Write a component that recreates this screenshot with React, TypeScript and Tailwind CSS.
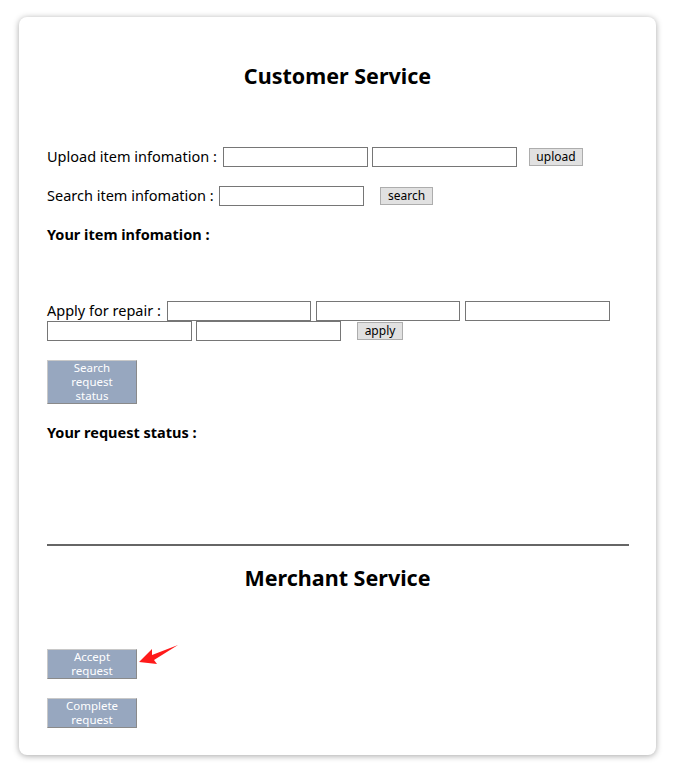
import React from "react";

const font = { fontFamily: '"Noto Sans", "Open Sans", sans-serif' };

function Input({ w = "w-[145px]" }: { w?: string }) {
  return <div className={`${w} h-[20px] border border-[#767676] bg-white shrink-0`} />;
}

function SmallBtn({ label, w }: { label: string; w: string }) {
  return (
    <div className={`${w} h-[18px] border border-[#adadad] bg-[#e1e1e1] flex items-center justify-center text-[12px] leading-none text-black shrink-0`}>
      {label}
    </div>
  );
}

function BlueBtn({ lines, h }: { lines: string[]; h: string }) {
  return (
    <div className={`w-[90px] ${h} border border-t-[#c8c8c8] border-l-[#c8c8c8] border-r-[#8a8a8a] border-b-[#8a8a8a] bg-[#97a7bf] flex flex-col items-center justify-center text-white text-[11.5px] leading-[14px]`}>
      {lines.map((l) => (
        <span key={l} className="block h-[14px] leading-[14px]">{l}</span>
      ))}
    </div>
  );
}

export default function App() {
  return (
    <div className="w-[674px] h-[772px] bg-white pt-[17px] pl-[19px]" style={font}>
      <div className="w-[637px] h-[738px] bg-white rounded-[8px] shadow-[0_1px_6px_rgba(0,0,0,0.35)] px-[28px] pt-[44px] text-black relative">
        <h1 className="h-[30px] flex items-center justify-center text-[21.5px] font-bold">Customer Service</h1>

        <div className="mt-[56px] flex items-center h-[20px] text-[14.5px]">
          <span className="w-[176px] shrink-0 whitespace-nowrap">Upload item infomation :</span>
          <Input />
          <div className="w-[4px]" />
          <Input />
          <div className="w-[12px]" />
          <SmallBtn label="upload" w="w-[54px]" />
        </div>

        <div className="mt-[19px] flex items-center h-[20px] text-[14.5px]">
          <span className="w-[172px] shrink-0 whitespace-nowrap">Search item infomation :</span>
          <Input />
          <div className="w-[16px]" />
          <SmallBtn label="search" w="w-[53px]" />
        </div>

        <div className="mt-[19px] h-[20px] flex items-center text-[14.5px] font-bold">Your item infomation :</div>

        <div className="mt-[56px] flex items-center h-[20px] text-[14.5px]">
          <span className="w-[120px] shrink-0 whitespace-nowrap">Apply for repair :</span>
          <Input w="w-[144px]" />
          <div className="w-[5px]" />
          <Input w="w-[144px]" />
          <div className="w-[5px]" />
          <Input w="w-[145px]" />
        </div>
        <div className="flex items-center h-[20px]">
          <Input />
          <div className="w-[4px]" />
          <Input />
          <div className="w-[16px]" />
          <SmallBtn label="apply" w="w-[46px]" />
        </div>

        <div className="mt-[19px]">
          <BlueBtn lines={["Search", "request", "status"]} h="h-[44px]" />
        </div>

        <div className="mt-[19px] h-[20px] flex items-center text-[14.5px] font-bold">Your request status :</div>

        <div className="mt-[101px] h-[2px] bg-[#666666] w-[582px]" />

        <h2 className="mt-[17px] h-[30px] flex items-center justify-center text-[21.5px] font-bold">Merchant Service</h2>

        <div className="mt-[56px] relative">
          <BlueBtn lines={["Accept", "request"]} h="h-[30px]" />
          <svg className="absolute left-[91px] top-[-5px]" width="42" height="24" viewBox="0 0 42 24">
            <path d="M1 18 L14 5 L14 11 L40 1 L16 16 L19 20 Z" fill="#ff1a1a" />
          </svg>
        </div>

        <div className="mt-[19px]">
          <BlueBtn lines={["Complete", "request"]} h="h-[30px]" />
        </div>
      </div>
    </div>
  );
}
